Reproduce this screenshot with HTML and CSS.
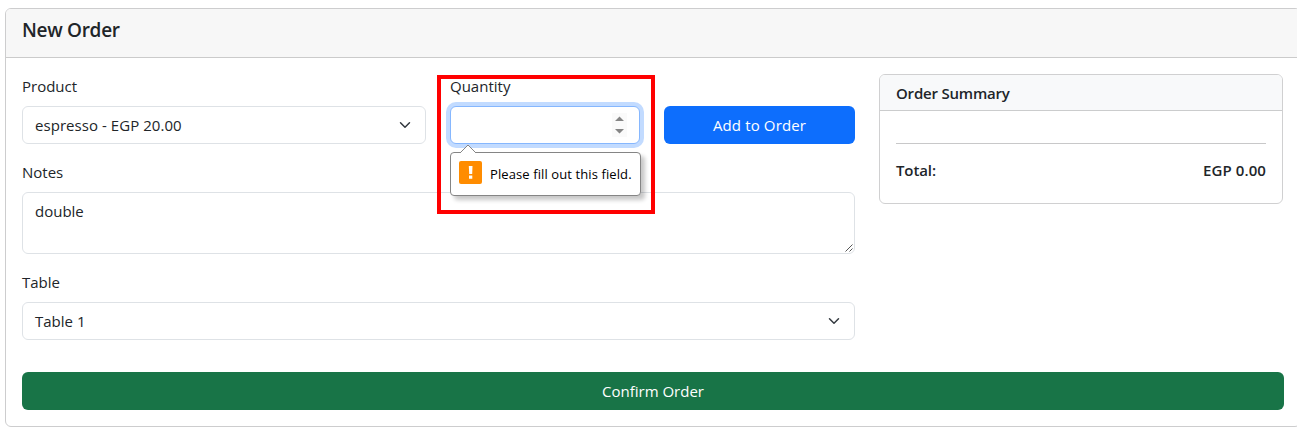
FILE: index.html
```
<!DOCTYPE html>
<html lang="en">
<head>
<meta charset="utf-8">
<title>New Order</title>
<link rel="stylesheet" href="styles.css">
</head>
<body>
<main class="card order-card">
  <header class="card-header"><h5 class="title">New Order</h5></header>
  <div class="card-body">
    <div class="columns">
      <section class="fields">
        <div class="item-row">
          <div class="field">
            <label class="label">Product</label>
            <div class="control select"><span class="product-name">espresso - EGP 20.00</span>
              <svg class="chevron" viewBox="0 0 16 16"><path d="m2 5 6 6 6-6"/></svg>
            </div>
          </div>
          <div class="field quantity">
            <label class="label">Quantity</label>
            <div class="control focused">
              <svg class="spinner" viewBox="0 0 15 24"><rect width="15" height="24" fill="#fafafa"/><path d="M3 8 7.500 3.500 12 8zM3 16h9l-4.500 4.500z" fill="#858585"/></svg>
            </div>
            <div class="tooltip">
              <svg class="pointer" viewBox="0 0 18 9"><path d="M1 9 9 1l8 8" fill="#fff" stroke="#858585"/></svg>
              <span class="warn"><svg viewBox="0 0 23 23"><path d="M9.800 5h3.700l-.3 8h-3zM10 14.500h3.300v3.300H10z" fill="#fff"/></svg></span>
              <span class="tip-text">Please fill out this field.</span>
            </div>
            <div class="highlight"></div>
          </div>
          <button class="btn add"><span>Add to Order</span></button>
        </div>
        <div class="field">
          <label class="label">Notes</label>
          <div class="control notes"><span>double</span>
            <svg class="grip" viewBox="0 0 8 8"><path d="M.5 7.500l7-7M4.500 7.500l3-3" fill="none" stroke="#555"/></svg>
          </div>
        </div>
        <div class="field">
          <label class="label">Table</label>
          <div class="control select"><span>Table 1</span>
            <svg class="chevron" viewBox="0 0 16 16"><path d="m2 5 6 6 6-6"/></svg>
          </div>
        </div>
      </section>
      <aside class="card summary">
        <h6 class="summary-header"><span>Order Summary</span></h6>
        <div class="summary-body">
          <hr class="rule">
          <div class="total"><span>Total:</span><span class="amount">EGP 0.00</span></div>
        </div>
      </aside>
    </div>
    <button class="btn confirm"><span>Confirm Order</span></button>
  </div>
</main>
</body>
</html>
```
FILE: styles.css
```
* { box-sizing: border-box; }
html { overflow: hidden; }
body {
  margin: 0;
  padding: 8px 0 0 5px;
  background: #fff;
  color: #212529;
  font: 15px/24px "Open Sans", "Noto Sans", sans-serif;
}
.card { border: 1px solid #cdcdce; border-radius: 6px; background: #fff; overflow: hidden; }
.order-card { width: 1296px; height: 419px; }
.card-header { height: 49px; padding: 9px 16px; background: #f7f7f7; border-bottom: 1px solid #cbcbcb; }
.title { margin: 0; font-size: 19px; line-height: 25px; font-weight: 600; letter-spacing: -.3px; }
.card-body { padding: 16px; }
.columns { display: grid; grid-template-columns: 833px 404px; gap: 24px; align-items: start; }
.fields { display: flex; flex-direction: column; gap: 16px; }
.item-row { display: grid; grid-template-columns: 404px 190px 191px; gap: 24px; align-items: end; }
.label { display: block; margin-bottom: 8px; }
.control {
  display: flex;
  align-items: center;
  justify-content: space-between;
  height: 38px;
  padding: 0 12px;
  border: 1px solid #dee2e6;
  border-radius: 6px;
  background: #fff;
}
.product-name { letter-spacing: .05px; }
.chevron { width: 12px; height: 12px; margin-right: 2px; fill: none; stroke: #343a40; stroke-width: 2; stroke-linecap: round; stroke-linejoin: round; }
.quantity { position: relative; }
.focused { justify-content: flex-end; border-color: #86b7fe; box-shadow: 0 0 0 4px #c2dbff; }
.spinner { width: 15px; height: 24px; }
.tooltip {
  position: absolute;
  z-index: 2;
  left: 0;
  top: 78px;
  display: flex;
  align-items: center;
  width: 191px;
  height: 44px;
  padding: 0 8px;
  border: 1px solid #858585;
  border-radius: 4px;
  background: #fff;
  color: #000;
  font-size: 13px;
  letter-spacing: .1px;
  white-space: nowrap;
  box-shadow: 4px 4px 4px rgba(0, 0, 0, .22);
}
.pointer { position: absolute; left: 8px; top: -9px; width: 18px; height: 9px; }
.warn { width: 23px; height: 23px; margin-top: -3px; border-radius: 2px; background: #ff8c00; }
.warn svg { display: block; }
.tip-text { margin-left: 8px; }
.highlight { position: absolute; z-index: 1; left: -13px; top: 1px; width: 218px; height: 139px; border: 4px solid #f00; }
.btn { height: 38px; border: 0; border-radius: 6px; color: #fff; font: inherit; }
.add { background: #0d6efd; letter-spacing: .14px; }
.notes { position: relative; height: 62px; align-items: flex-start; padding-top: 6px; }
.grip { position: absolute; right: 1px; bottom: 1px; width: 8px; height: 8px; }
.summary { height: 130px; border-color: #d0d0d1; }
.summary-header { height: 36px; margin: 0; padding: 6px 16px 0; background: #f8f9fa; border-bottom: 1px solid #cbcccd; font-size: 15px; font-weight: 600; letter-spacing: -.2px; }
.summary-body { padding: 32px 16px 0; }
.rule { height: 1px; margin: 0 0 14px; border: 0; background: #c8c8c9; }
.total { display: flex; justify-content: space-between; font-weight: 600; letter-spacing: -.1px; }
.amount { letter-spacing: .1px; }
.confirm { width: 1262px; margin-top: 32px; background: #187447; }
```
